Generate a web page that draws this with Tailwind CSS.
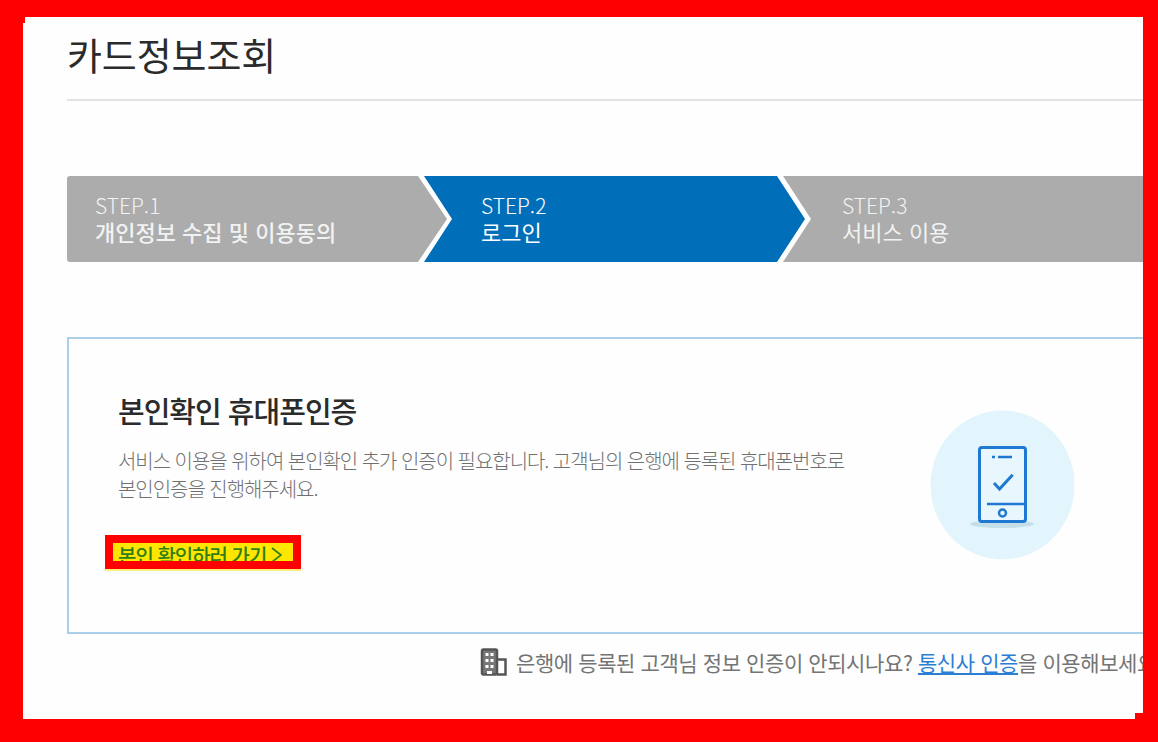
<!DOCTYPE html>
<html lang="ko">

<head>
    <meta charset="UTF-8">
    <meta name="viewport" content="width=device-width, initial-scale=1.0">
    <title>카드정보조회</title>
    <script src="https://cdn.jsdelivr.net/npm/@tailwindcss/browser@4"></script>
</head>

<body class="bg-[#ff0000] h-screen overflow-hidden pt-[17px] pl-[23px] pr-[15px] pb-[23px] font-['Noto_Sans_CJK_KR','Noto_Sans',sans-serif]">
    <div class="relative bg-[#fefefe] h-full overflow-hidden pl-[44px]">
        <!-- red frame notches -->
        <div class="absolute left-0 top-0 w-[2px] h-[6px] bg-[#ff0000]"></div>
        <div class="absolute right-0 bottom-0 w-[8px] h-[6px] bg-[#ff0000]"></div>

        <div class="h-[82px] border-b-2 border-[#e3e3e3] box-content">
            <h1 class="pt-[10px] text-[38px] leading-[54px] font-normal text-[#2b2b2b] tracking-[-0.1px]">카드정보조회</h1>
        </div>

        <!-- steps -->
        <div class="flex h-[86px] mt-[75px] text-[21px] leading-[26px] text-[#f2f2f2]">
            <div class="w-[380px] shrink-0 bg-[#acacac] rounded-l-[3px] pl-[28px] pt-[16px] [clip-path:polygon(0_0,351px_0,380px_50%,351px_100%,0_100%)]">
                <p class="font-light">STEP.1</p>
                <p class="font-medium text-[22px] whitespace-nowrap">개인정보 수집 및 이용동의</p>
            </div>
            <div class="w-[381px] shrink-0 -ml-[23px] bg-[#006eb8] pl-[57px] pt-[16px] text-white [clip-path:polygon(0_0,353px_0,381px_50%,353px_100%,0_100%,28px_50%)]">
                <p class="font-light">STEP.2</p>
                <p class="font-normal text-[22px]">로그인</p>
            </div>
            <div class="grow -ml-[22px] bg-[#acacac] pl-[59px] pt-[16px] [clip-path:polygon(0_0,100%_0,100%_100%,0_100%,28px_50%)]">
                <p class="font-light">STEP.3</p>
                <p class="font-normal text-[22px]">서비스 이용</p>
            </div>
        </div>

        <!-- card -->
        <div class="flex w-[1110px] h-[297px] mt-[75px] border-2 border-[#a9d0e8] pl-[49px]">
            <div class="w-[812px] shrink-0 pt-[48px]">
                <h2 class="text-[29px] leading-[46px] font-medium text-[#2b2b2b] tracking-[-1px]">본인확인 휴대폰인증</h2>
                <p class="mt-[14px] text-[20px] leading-[28px] text-[#707070] tracking-[-1.05px] font-light">서비스 이용을 위하여 본인확인 추가 인증이 필요합니다. 고객님의 은행에 등록된 휴대폰번호로<br>본인인증을 진행해주세요.</p>
                <div class="mt-[32px] -ml-[13px] w-[196px] h-[34px] border-[8px] border-[#ff0000] bg-[#ffe600] shadow-[0_2px_0_#fdeb7c] overflow-hidden box-border">
                    <div class="flex items-start gap-[5px] pl-[5px] text-[20px] leading-[26px] font-medium text-[#2f7f14] whitespace-nowrap tracking-[-1px]">
                        <span>본인 확인하러 가기</span>
                        <svg class="shrink-0 mt-[4px]" width="11" height="16" viewBox="0 0 11 16" fill="none" stroke="#2f7f14" stroke-width="1.6">
                            <path d="M1 1l9 7-9 7" />
                        </svg>
                    </div>
                </div>
            </div>
            <svg class="shrink-0 mt-[71px]" width="144" height="150" viewBox="0 0 144 150" fill="none">
                <ellipse cx="72.500" cy="75" rx="72" ry="74.500" fill="#e3f5fc" />
                <ellipse cx="72" cy="114" rx="32" ry="4" fill="#c4dfe8" />
                <rect x="49.500" y="37.500" width="46" height="74" rx="2.500" fill="#e8f7fd" stroke="#1f78d1" stroke-width="3" />
                <path d="M62 47h3M68 47h14" stroke="#1f78d1" stroke-width="2.500" />
                <path d="M64 73l5.500 6L82.700 64.700" stroke="#1f78d1" stroke-width="3" />
                <path d="M57 94h39" stroke="#1f78d1" stroke-width="2.500" />
                <circle cx="72.500" cy="103" r="3.500" stroke="#1f78d1" stroke-width="2.500" />
            </svg>
        </div>

        <!-- footer note -->
        <div class="flex items-center gap-[9px] mt-[13px] ml-[413px] whitespace-nowrap text-[21px] leading-[30px] text-[#747474] tracking-[-0.4px]">
            <svg class="shrink-0" width="27" height="28" viewBox="0 0 27 28" fill="none">
                <path d="M17 11.500h8.500v15H17" fill="#ffffff" stroke="#555555" stroke-width="2.500" />
                <rect x="2" y="1.500" width="15" height="25" rx="1.500" fill="#777777" stroke="#555555" stroke-width="2.500" />
                <path d="M5.500 5h3v3h-3Zm5 0h3v3h-3ZM5.500 11h3v3h-3Zm5 0h3v3h-3ZM5.500 17h3v3h-3Zm5 0h3v3h-3Z" fill="#ffffff" />
                <path d="M7 23h5v3H7Z" fill="#ffffff" />
            </svg>
            <p>은행에 등록된 고객님 정보 인증이 안되시나요? <a class="text-[#2a7fd4] underline" href="#">통신사 인증</a>을 이용해보세요</p>
        </div>
    </div>
</body>

</html>
